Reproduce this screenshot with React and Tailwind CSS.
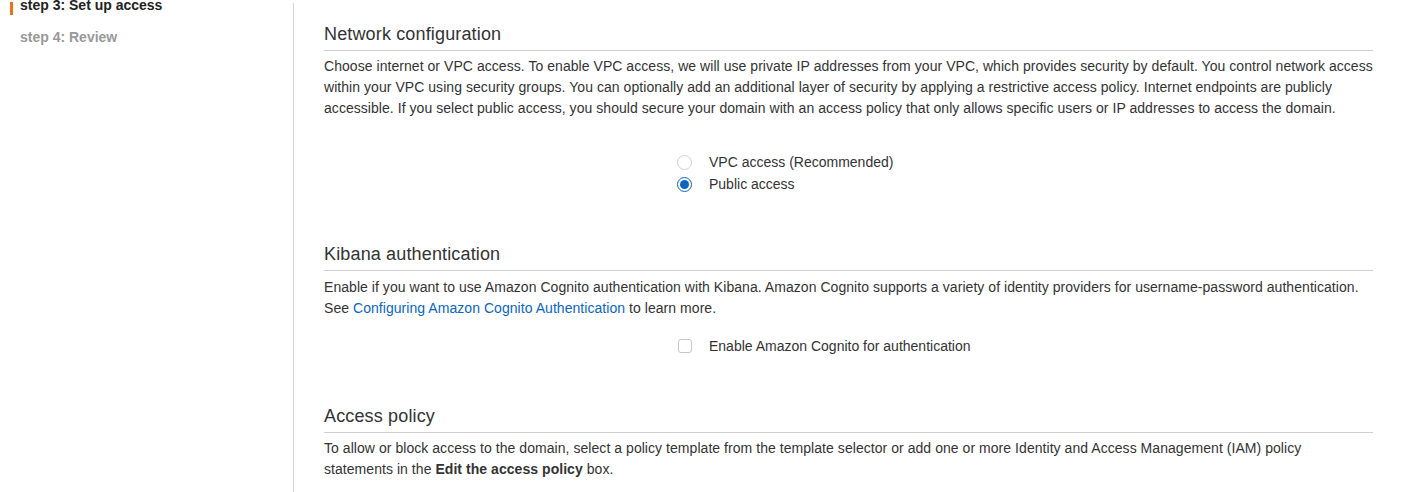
import React from "react";

function Radio({ checked }) {
  return checked ? (
    <span className="flex h-[15px] w-[15px] items-center justify-center rounded-full border border-[#0a66c2] bg-white">
      <span className="h-[9px] w-[9px] rounded-full bg-[#0a66c2]" />
    </span>
  ) : (
    <span className="h-[15px] w-[15px] rounded-full border border-[#d0d0d0] bg-white" />
  );
}

function Section({ title, children }) {
  return (
    <div>
      <h2 className="border-b border-[#cfcfcf] pb-[5px] text-[18px] font-normal leading-[22px] tracking-[0.15px] text-[#333]">
        {title}
      </h2>
      {children}
    </div>
  );
}

export default function App() {
  return (
    <div
      className="flex h-[492px] w-[1403px] overflow-hidden bg-white text-[#333]"
      style={{ fontFamily: '"Liberation Sans", Arial, Helvetica, sans-serif' }}
    >
      <aside className="w-[293px] shrink-0 pl-[10px]">
        <div className="mt-[-3px] flex flex-col gap-[14px]">
          <div className="flex items-start">
            <span className="mt-[5px] h-[13px] w-[3px] bg-[#ec7211]" />
            <span className="pl-[7px] text-[14px] font-bold leading-[17px] text-[#222]">
              step 3: Set up access
            </span>
          </div>
          <div className="pl-[10px] text-[14px] font-bold leading-[17px] text-[#999]">
            step 4: Review
          </div>
        </div>
      </aside>
      <main className="mt-[3px] flex-1 border-l border-[#d5d5d5] pl-[30px] pr-[30px]">
        <div className="pt-[20px]">
          <Section title="Network configuration">
            <p className="mt-[5px] text-[14px] leading-[21px] tracking-[0.05px] text-[#333]">
              Choose internet or VPC access. To enable VPC access, we will use private IP addresses from your VPC, which provides security by default. You control network access
              <br />
              within your VPC using security groups. You can optionally add an additional layer of security by applying a restrictive access policy. Internet endpoints are publicly
              <br />
              accessible. If you select public access, you should secure your domain with an access policy that only allows specific users or IP addresses to access the domain.
            </p>
            <div className="mt-[32px] flex flex-col pl-[353px] text-[14px] leading-[22px]">
              <label className="flex items-center">
                <Radio checked={false} />
                <span className="pl-[17px]">VPC access (Recommended)</span>
              </label>
              <label className="flex items-center">
                <Radio checked />
                <span className="pl-[17px]">Public access</span>
              </label>
            </div>
          </Section>
        </div>
        <div className="mt-[48px]">
          <Section title="Kibana authentication">
            <p className="mt-[6px] text-[14px] leading-[21px] tracking-[0.05px] text-[#333]">
              Enable if you want to use Amazon Cognito authentication with Kibana. Amazon Cognito supports a variety of identity providers for username-password authentication.
              <br />
              See <span className="text-[#0a66c2]">Configuring Amazon Cognito Authentication</span> to learn more.
            </p>
            <label className="mt-[16px] flex items-center pl-[354px] text-[14px] leading-[22px]">
              <span className="h-[14px] w-[14px] rounded-[3px] border border-[#c8c8c8] bg-white" />
              <span className="pl-[17px]">Enable Amazon Cognito for authentication</span>
            </label>
          </Section>
        </div>
        <div className="mt-[48px]">
          <Section title="Access policy">
            <p className="mt-[5px] text-[14px] leading-[21px] tracking-[0.05px] text-[#333]">
              To allow or block access to the domain, select a policy template from the template selector or add one or more Identity and Access Management (IAM) policy
              <br />
              statements in the <b className="font-bold">Edit the access policy</b> box.
            </p>
          </Section>
        </div>
      </main>
    </div>
  );
}
